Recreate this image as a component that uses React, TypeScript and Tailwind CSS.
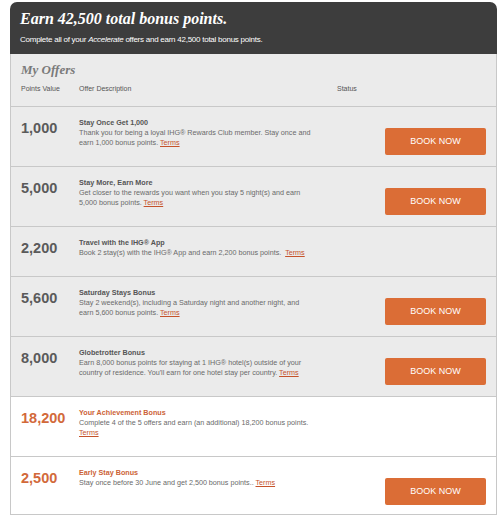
import React from 'react';

type Offer = {
  points: string;
  title: string;
  lines: string[];
  termsOwnLine?: boolean;
  button: boolean;
  highlight?: boolean;
  height: string;
};

const offers: Offer[] = [
  {
    points: '1,000',
    title: 'Stay Once Get 1,000',
    lines: ['Thank you for being a loyal IHG® Rewards Club member. Stay once and', 'earn 1,000 bonus points. '],
    button: true,
    height: 'h-[60px]',
  },
  {
    points: '5,000',
    title: 'Stay More, Earn More',
    lines: ['Get closer to the rewards you want when you stay 5 night(s) and earn', '5,000 bonus points. '],
    button: true,
    height: 'h-[60px]',
  },
  {
    points: '2,200',
    title: 'Travel with the IHG® App',
    lines: ['Book 2 stay(s) with the IHG® App and earn 2,200 bonus points.\u00a0 '],
    button: false,
    height: 'h-[50px]',
  },
  {
    points: '5,600',
    title: 'Saturday Stays Bonus',
    lines: ['Stay 2 weekend(s), including a Saturday night and another night, and', 'earn 5,600 bonus points. '],
    button: true,
    height: 'h-[60px]',
  },
  {
    points: '8,000',
    title: 'Globetrotter Bonus',
    lines: ['Earn 8,000 bonus points for staying at 1 IHG® hotel(s) outside of your', "country of residence. You'll earn for one hotel stay per country. "],
    button: true,
    height: 'h-[60px]',
  },
  {
    points: '18,200',
    title: 'Your Achievement Bonus',
    lines: ['Complete 4 of the 5 offers and earn (an additional) 18,200 bonus points.'],
    termsOwnLine: true,
    button: false,
    highlight: true,
    height: 'h-[60px]',
  },
  {
    points: '2,500',
    title: 'Early Stay Bonus',
    lines: ['Stay once before 30 June and get 2,500 bonus points.. '],
    button: true,
    highlight: true,
    height: 'h-[58px]',
  },
];

const Terms = () => <span className="text-[#c5532b] underline">Terms</span>;

const OfferRow = ({ offer }: { offer: Offer }) => (
  <div
    className={`flex border-t border-[#c8c8c8] pt-[11px] ${offer.height} ${
      offer.highlight ? 'bg-white' : 'bg-[#ebebeb]'
    }`}>
    <div
      className={`w-[68px] pl-[10px] text-[14.5px] font-bold leading-[20px] ${
        offer.highlight ? 'text-[#d2693a]' : 'text-[#5a5a5a]'
      }`}>
      {offer.points}
    </div>
    <div className="flex-1 text-[7.2px] leading-[10px] text-[#6a6a6a] whitespace-nowrap">
      <div className={`font-bold ${offer.highlight ? 'text-[#cc6236]' : 'text-[#555]'}`}>{offer.title}</div>
      {offer.lines.map((line, i) => (
        <div key={i}>
          {line}
          {!offer.termsOwnLine && i === offer.lines.length - 1 && <Terms />}
        </div>
      ))}
      {offer.termsOwnLine && (
        <div>
          <Terms />
        </div>
      )}
    </div>
    {offer.button && (
      <div className="pr-[10px] pt-[9px]">
        <button className="w-[101px] h-[27px] rounded-[2px] bg-[#db6d36] text-white text-[9px]">BOOK NOW</button>
      </div>
    )}
  </div>
);

export default function App() {
  return (
    <div className="w-[504px] h-[528px] bg-white pt-[2px] pl-[10px]" style={{ fontFamily: '"Liberation Sans", Arial, sans-serif' }}>
      <div className="w-[487px]">
        <div className="h-[52px] bg-[#3d3d3d] rounded-t-[7px] px-[10px] pt-[7px] text-white">
          <h1 className="text-[16px] leading-[20px] font-bold italic" style={{ fontFamily: '"Liberation Serif", serif' }}>
            Earn 42,500 total bonus points.
          </h1>
          <p className="mt-[6px] text-[8px] leading-[10px] tracking-[-0.25px]">
            Complete all of your <i>Accelerate</i> offers and earn 42,500 total bonus points.
          </p>
        </div>
        <div className="border-x border-b border-[#c8c8c8] bg-[#ebebeb]">
          <div className="h-[52px] pt-[7px]">
            <h2
              className="pl-[10px] text-[13px] leading-[18px] font-bold italic text-[#7a7a7a]"
              style={{ fontFamily: '"Liberation Serif", serif' }}>
              My Offers
            </h2>
            <div className="flex mt-[5px] text-[7px] leading-[10px] text-[#555]">
              <div className="w-[68px] pl-[10px]">Points Value</div>
              <div className="w-[258px]">Offer Description</div>
              <div>Status</div>
            </div>
          </div>
          {offers.map((o) => (
            <OfferRow key={o.points} offer={o} />
          ))}
        </div>
      </div>
    </div>
  );
}
